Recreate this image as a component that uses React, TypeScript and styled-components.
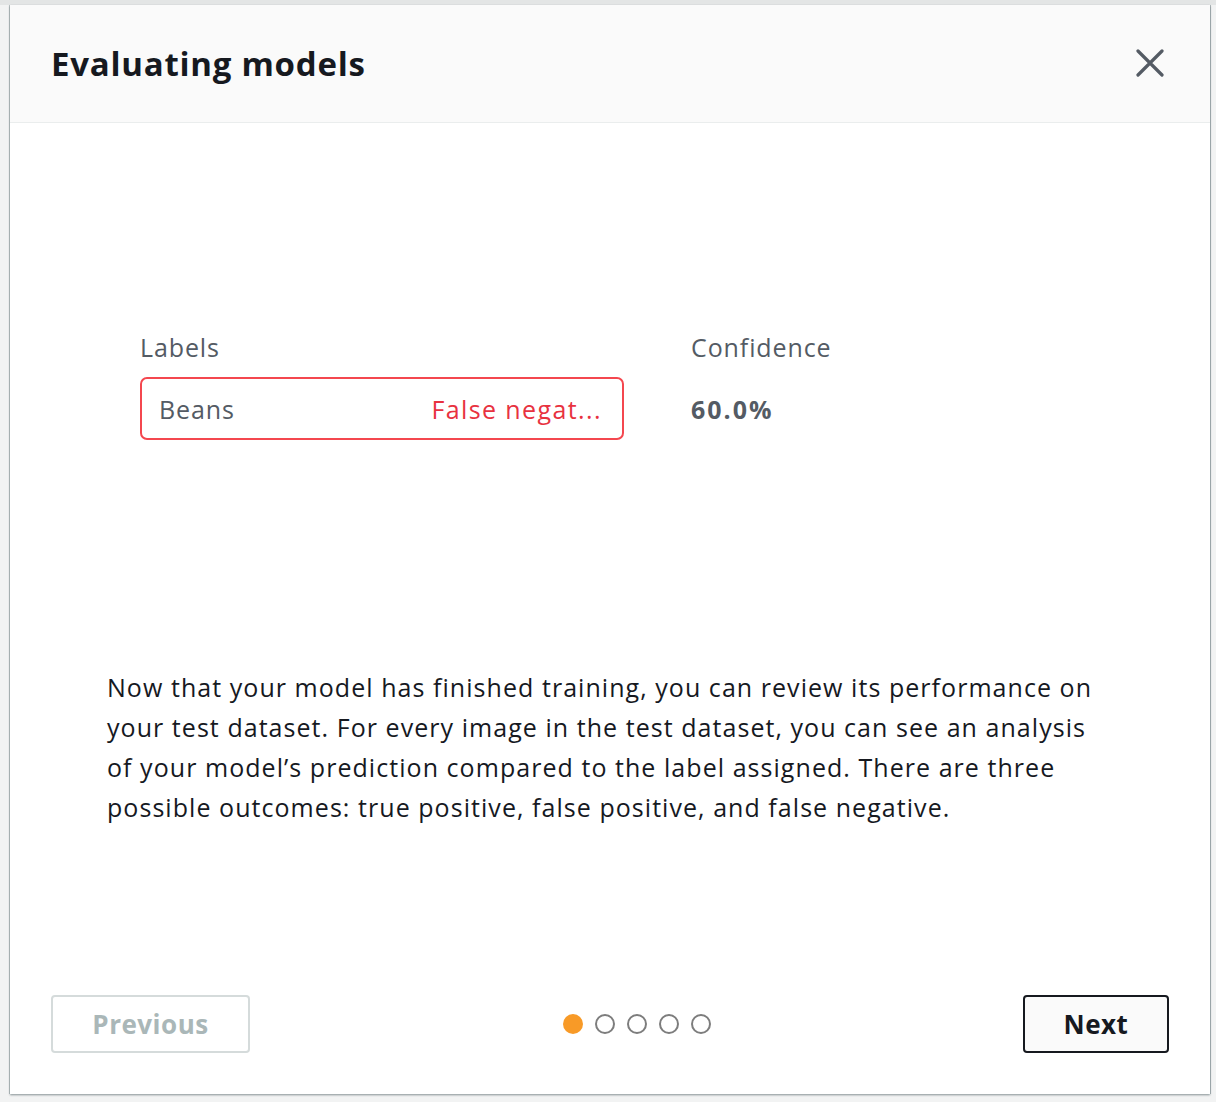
import React from "react";
import styled, { createGlobalStyle } from "styled-components";

const GlobalStyle = createGlobalStyle`
  html, body { margin: 0; padding: 0; }
  body {
    background: #f2f3f3;
    font-family: "Open Sans", "Noto Sans", Arial, sans-serif;
    color: #16191f;
  }
`;

const Page = styled.div`
  width: 1216px;
  height: 1102px;
  box-sizing: border-box;
  padding: 5px 6px 8px 10px;
  background: linear-gradient(#e3e5e5 0 5px, #f2f3f3 5px);
`;

const Dialog = styled.div`
  width: 1200px;
  height: 1089px;
  display: flex;
  flex-direction: column;
  background: #ffffff;
  box-shadow: 0 1px 2px rgba(0, 28, 36, 0.45), -1px 0 0 rgba(0, 28, 36, 0.2), 1px 0 0 rgba(0, 28, 36, 0.25);
`;

const Header = styled.div`
  height: 118px;
  box-sizing: border-box;
  display: flex;
  align-items: center;
  justify-content: space-between;
  padding: 0 40px 0 41px;
  background: #fafafa;
  border-bottom: 1px solid #eaeded;
`;

const Title = styled.h1`
  margin: 0;
  font-size: 33px;
  font-weight: 700;
  color: #16191f;
  letter-spacing: 0.75px;
`;

const CloseButton = styled.button`
  width: 40px;
  height: 40px;
  display: flex;
  align-items: center;
  justify-content: center;
  border: none;
  background: transparent;
  padding: 0;
  margin-top: -2px;
  cursor: pointer;
`;

const Body = styled.div`
  flex: 1;
  display: flex;
  flex-direction: column;
`;

const Illustration = styled.div`
  display: grid;
  grid-template-columns: 484px auto;
  column-gap: 67px;
  row-gap: 15px;
  padding: 209px 0 0 130px;
  align-items: center;
`;

const ColumnHeading = styled.div`
  font-size: 25px;
  line-height: 30px;
  letter-spacing: 0.9px;
  color: #545b64;
`;

const LabelBox = styled.div`
  height: 63px;
  box-sizing: border-box;
  border: 2px solid #f4474f;
  border-radius: 7px;
  display: flex;
  align-items: center;
  justify-content: space-between;
  padding: 0 20px 0 17px;
`;

const LabelName = styled.span`
  font-size: 25px;
  letter-spacing: 0.9px;
  color: #545b64;
`;

const Outcome = styled.span`
  font-size: 25px;
  letter-spacing: 1.4px;
  color: #e8323f;
`;

const ConfidenceValue = styled.div`
  font-size: 25px;
  font-weight: 700;
  letter-spacing: 2px;
  color: #545b64;
`;

const Description = styled.p`
  margin: 227px 0 0;
  padding: 0 110px 0 97px;
  font-size: 25px;
  letter-spacing: 1.05px;
  line-height: 40px;
  color: #16191f;
`;

const Footer = styled.div`
  margin-top: auto;
  display: flex;
  align-items: center;
  justify-content: space-between;
  padding: 0 41px 41px;
`;

const NavButton = styled.button<{ $primary?: boolean }>`
  height: 58px;
  box-sizing: border-box;
  padding: 0;
  width: ${(p) => (p.$primary ? "146px" : "199px")};
  border-radius: 4px;
  border: 2px solid ${(p) => (p.$primary ? "#16191f" : "#d5dbdb")};
  background: ${(p) => (p.$primary ? "#fafafa" : "#ffffff")};
  color: ${(p) => (p.$primary ? "#16191f" : "#aab7b8")};
  font-family: "Open Sans", "Noto Sans", Arial, sans-serif;
  font-size: 26px;
  letter-spacing: 0.5px;
  font-weight: 700;
  cursor: pointer;
`;

const Dots = styled.div`
  display: flex;
  gap: 12px;
`;

const Dot = styled.span<{ $active?: boolean }>`
  width: 20px;
  height: 20px;
  box-sizing: border-box;
  border-radius: 50%;
  background: ${(p) => (p.$active ? "#f89a27" : "transparent")};
  border: ${(p) => (p.$active ? "none" : "2px solid #7d7d7d")};
`;

const CloseIcon = () => (
  <svg width="28" height="28" viewBox="0 0 28 28" fill="none">
    <path d="M2 2 L26 26 M26 2 L2 26" stroke="#545b64" strokeWidth="3.2" strokeLinecap="round" />
  </svg>
);

export default function App() {
  return (
    <>
      <GlobalStyle />
      <Page>
        <Dialog>
          <Header>
            <Title>Evaluating models</Title>
            <CloseButton aria-label="Close">
              <CloseIcon />
            </CloseButton>
          </Header>
          <Body>
            <Illustration>
              <ColumnHeading>Labels</ColumnHeading>
              <ColumnHeading>Confidence</ColumnHeading>
              <LabelBox>
                <LabelName>Beans</LabelName>
                <Outcome>False negat...</Outcome>
              </LabelBox>
              <ConfidenceValue>60.0%</ConfidenceValue>
            </Illustration>
            <Description>
              Now that your model has finished training, you can review its performance on your test dataset. For
              every image in the test dataset, you can see an analysis of your model’s prediction compared to the
              label assigned. There are three possible outcomes: true positive, false positive, and false negative.
            </Description>
          </Body>
          <Footer>
            <NavButton disabled>Previous</NavButton>
            <Dots>
              <Dot $active />
              <Dot />
              <Dot />
              <Dot />
              <Dot />
            </Dots>
            <NavButton $primary>Next</NavButton>
          </Footer>
        </Dialog>
      </Page>
    </>
  );
}
